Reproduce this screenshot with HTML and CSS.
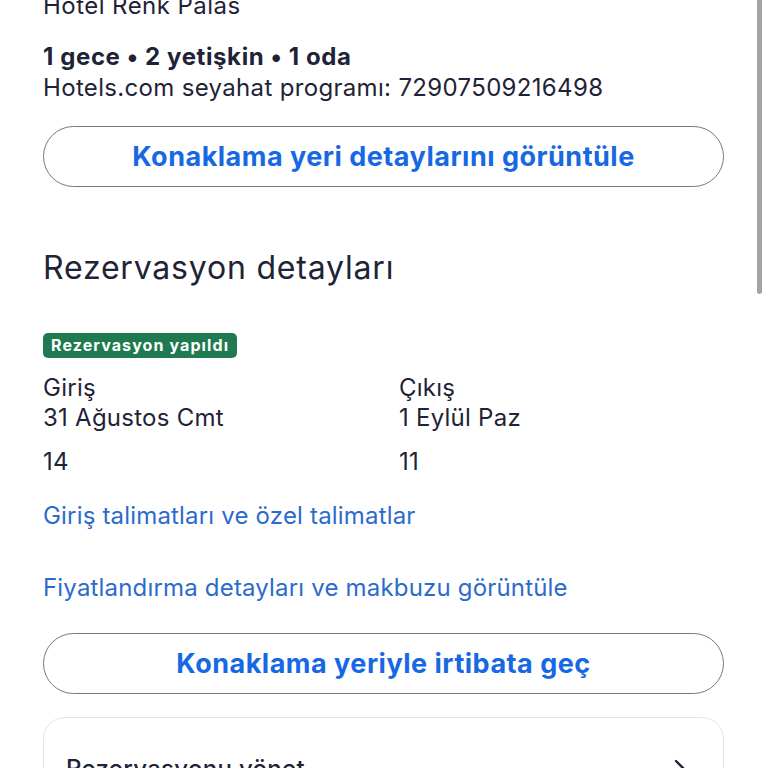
FILE: index.html
```html
<!DOCTYPE html>
<html lang="tr">
<head>
    <meta charset="UTF-8">
    <meta name="viewport" content="width=device-width, initial-scale=1.0">
    <title>Rezervasyon detayları</title>
    <link rel="stylesheet" href="styles.css">
</head>
<body>
    <div class="page">
        <div class="hotel-name">Hotel Renk Palas</div>

        <div class="summary">
            <div class="stay">1 gece • 2 yetişkin • 1 oda</div>
            <div class="itinerary">Hotels.com seyahat programı: 72907509216498</div>
        </div>

        <button class="pill-button first">Konaklama yeri detaylarını görüntüle</button>

        <h2 class="section-title">Rezervasyon detayları</h2>

        <div class="badge">Rezervasyon yapıldı</div>

        <div class="dates">
            <div class="date-col">
                <div class="date-label">Giriş</div>
                <div class="date-value">31 Ağustos Cmt</div>
                <div class="date-time">14</div>
            </div>
            <div class="date-col">
                <div class="date-label">Çıkış</div>
                <div class="date-value">1 Eylül Paz</div>
                <div class="date-time">11</div>
            </div>
        </div>

        <a class="link" href="#">Giriş talimatları ve özel talimatlar</a>
        <a class="link link-price" href="#">Fiyatlandırma detayları ve makbuzu görüntüle</a>

        <button class="pill-button contact">Konaklama yeriyle irtibata geç</button>

        <div class="card">
            <div class="card-row">
                <span>Rezervasyonu yönet</span>
                <svg class="chevron" width="14" height="22" viewBox="0 0 14 22">
                    <path d="M3 3 L11 11 L3 19" fill="none" stroke="#1f2338" stroke-width="2.4" stroke-linecap="round" stroke-linejoin="round"/>
                </svg>
            </div>
        </div>
    </div>
    <div class="scrollbar"></div>
</body>
</html>
```

FILE: styles.css
```css
html, body {
    margin: 0;
    height: 100%;
    overflow: hidden;
    background: #ffffff;
}

body {
    font-family: Inter, "Noto Sans", sans-serif;
    color: #1f2338;
    position: relative;
}

.page {
    width: 681px;
    padding-left: 43px;
}

.hotel-name {
    font-size: 24px;
    line-height: 30px;
    margin-top: -9px;
    letter-spacing: 0.45px;
}

.summary {
    margin-top: 21px;
}

.stay {
    font-size: 24px;
    font-weight: 700;
    line-height: 30px;
    letter-spacing: 0.6px;
}

.itinerary {
    margin-top: 1px;
    font-size: 24px;
    line-height: 30px;
    letter-spacing: 0.33px;
}

.pill-button {
    display: block;
    width: 100%;
    height: 61px;
    border: 1.5px solid #7a7a7a;
    border-radius: 31px;
    background: #ffffff;
    color: #1668e3;
    font-family: inherit;
    font-size: 27px;
    font-weight: 700;
    letter-spacing: 0.5px;
    cursor: pointer;
}

.pill-button.first {
    margin-top: 23px;
}

.pill-button.contact {
    margin-top: 30px;
}

.section-title {
    margin: 61px 0 0;
    font-size: 32px;
    font-weight: 400;
    line-height: 40px;
    letter-spacing: 0.8px;
}

.badge {
    width: fit-content;
    margin-top: 45px;
    padding: 0 8px;
    height: 25px;
    line-height: 25px;
    border-radius: 5px;
    background: #1f7a50;
    color: #ffffff;
    font-size: 16px;
    font-weight: 700;
    letter-spacing: 1.1px;
}

.dates {
    display: grid;
    grid-template-columns: 356px 1fr;
    margin-top: 15px;
}

.date-label,
.date-value {
    font-size: 24px;
    line-height: 30px;
    letter-spacing: 0.25px;
}

.date-time {
    font-size: 24px;
    line-height: 30px;
    margin-top: 14px;
    letter-spacing: 0.25px;
}

.link {
    display: block;
    margin-top: 24px;
    color: #2c6bcb;
    font-size: 24px;
    line-height: 30px;
    text-decoration: none;
    letter-spacing: 0.18px;
}

.link-price {
    margin-top: 42px;
}

.card {
    margin-top: 23px;
    border: 1.5px solid #e4e4e4;
    border-radius: 22px;
    padding: 36px 36px 20px 22px;
}

.card-row {
    display: flex;
    justify-content: space-between;
    align-items: center;
    font-size: 24px;
    font-weight: 500;
    line-height: 30px;
    letter-spacing: 0.3px;
}

.scrollbar {
    position: absolute;
    top: -6px;
    right: 6px;
    width: 5px;
    height: 300px;
    border-radius: 3px;
    background: #a3a3a3;
}
```
